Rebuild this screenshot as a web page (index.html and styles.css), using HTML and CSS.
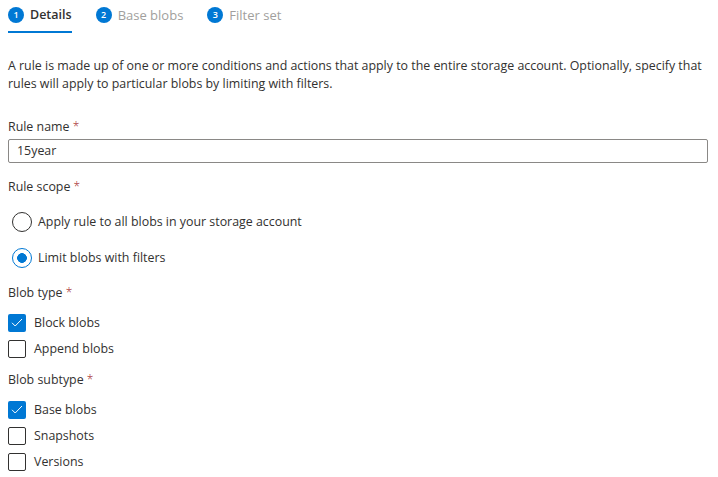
FILE: index.html
```html
<!DOCTYPE html>
<html lang="en">
<head>
<meta charset="utf-8">
<title>Add a rule</title>
<link rel="stylesheet" href="styles.css">
</head>
<body>
<nav class="tabs">
  <div class="tab active"><span class="num">1</span><span>Details</span></div>
  <div class="tab"><span class="num">2</span><span>Base blobs</span></div>
  <div class="tab"><span class="num">3</span><span>Filter set</span></div>
</nav>
<p class="desc">A rule is made up of one or more conditions and actions that apply to the entire storage account. Optionally, specify that rules will apply to particular blobs by limiting with filters.</p>
<div class="label name-label">Rule name <span class="req">*</span></div>
<div class="input">15year</div>
<div class="label scope-label">Rule scope <span class="req">*</span></div>
<div class="radios">
  <div class="radio"><span class="dot"></span><span>Apply rule to all blobs in your storage account</span></div>
  <div class="radio on"><span class="dot"></span><span>Limit blobs with filters</span></div>
</div>
<div class="label type-label">Blob type <span class="req">*</span></div>
<div class="checks">
  <div class="check on"><span class="box"><svg viewBox="0 0 18 18" width="18" height="18"><path d="M4 8.8 7.2 12 14 5" fill="none" stroke="#fff" stroke-width="1"/></svg></span><span>Block blobs</span></div>
  <div class="check"><span class="box"></span><span>Append blobs</span></div>
</div>
<div class="label subtype-label">Blob subtype <span class="req">*</span></div>
<div class="checks">
  <div class="check on"><span class="box"><svg viewBox="0 0 18 18" width="18" height="18"><path d="M4 8.8 7.2 12 14 5" fill="none" stroke="#fff" stroke-width="1"/></svg></span><span>Base blobs</span></div>
  <div class="check"><span class="box"></span><span>Snapshots</span></div>
  <div class="check"><span class="box"></span><span>Versions</span></div>
</div>
</body>
</html>
```
FILE: styles.css
```css
html, body { margin: 0; padding: 0; }
body {
  width: 718px;
  height: 477px;
  overflow: hidden;
  box-sizing: border-box;
  padding: 0 10px 0 8px;
  background: #fff;
  color: #323130;
  font-family: "Open Sans", "Noto Sans", sans-serif;
  font-size: 12.4px;
  line-height: 18px;
}
.tabs { display: flex; gap: 24px; height: 33px; }
.tab { display: flex; align-items: flex-start; gap: 6px; padding-top: 6px; box-sizing: border-box; height: 33px; color: #a19f9d; font-size: 13px; }
.tab.active { color: #323130; font-size: 12.5px; font-weight: 600; border-bottom: 2px solid #0078d4; }
.num { width: 16px; height: 16px; margin-top: 1px; border-radius: 50%; background: #0078d4; color: #fff; font-size: 9px; font-weight: 600; line-height: 16px; text-align: center; }
.desc { margin: 24px 0 0; width: 702px; }
.label { line-height: 18px; }
.req { color: #a4262c; font-size: 12px; font-weight: 300; }
.name-label { margin-top: 25px; }
.input { box-sizing: border-box; height: 24px; margin-top: 3px; padding: 0 0 0 8px; border: 1px solid #8a8886; border-radius: 2px; line-height: 22px; }
.scope-label { margin-top: 15px; }
.radios { display: flex; flex-direction: column; gap: 16px; margin-top: 16px; }
.radio { display: flex; align-items: center; gap: 6px; height: 20px; padding-left: 4px; }
.dot { box-sizing: border-box; width: 20px; height: 20px; border: 1px solid #323130; border-radius: 50%; }
.radio.on .dot { border-color: #0078d4; background: radial-gradient(circle, #0078d4 0 4.6px, #fff 5.1px); }
.type-label { margin-top: 16px; }
.subtype-label { margin-top: 13px; }
.checks { display: flex; flex-direction: column; gap: 8px; margin-top: 12px; }
.check { display: flex; align-items: center; gap: 8px; height: 18px; }
.box { box-sizing: border-box; width: 18px; height: 18px; border: 1px solid #323130; border-radius: 2px; }
.check.on .box { border: 0; background: #0078d4; }
.box svg { display: block; }
```
